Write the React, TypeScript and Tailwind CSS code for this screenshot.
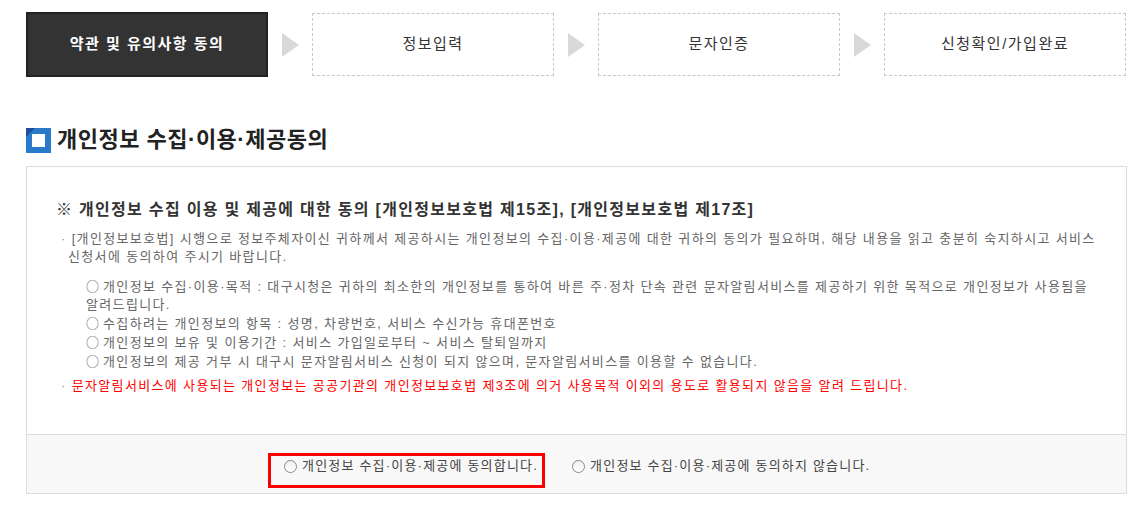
import React from 'react';

const steps = ['약관 및 유의사항 동의', '정보입력', '문자인증', '신청확인/가입완료'];

function Arrow() {
  return (
    <div className="w-[44px] flex justify-center">
      <div className="w-0 h-0 border-y-[12px] border-y-transparent border-l-[17px] border-l-[#d9d9d9]" />
    </div>
  );
}

function TitleIcon() {
  return (
    <svg width="25" height="25" viewBox="0 0 25 25">
      <rect x="0" y="0" width="25" height="25" fill="#2a7acb" />
      <polygon points="0,0 9,0 0,9" fill="#1f4f9a" />
      <rect x="6" y="6" width="13" height="13" fill="#fff" />
    </svg>
  );
}

function Radio() {
  return (
    <span className="inline-block w-[13px] h-[13px] rounded-full border border-[#8a8a8a] bg-gradient-to-b from-[#f0f0f0] to-white mr-[5px] shrink-0" />
  );
}

function Circle() {
  return <span className="font-['Noto_Sans_CJK_KR',sans-serif] tracking-normal pr-[4px]">○</span>;
}

export default function App() {
  return (
    <div className="w-[1143px] h-[510px] bg-white overflow-hidden font-['Liberation_Sans','Noto_Sans_CJK_KR',sans-serif] break-keep">
      <div className="flex items-center pl-[26px] pt-[12px]">
        {steps.map((s, i) => (
          <React.Fragment key={s}>
            {i > 0 && <Arrow />}
            {i === 0 ? (
              <div className="w-[242px] h-[65px] bg-[#333] border-2 border-[#222] flex items-center justify-center text-white font-bold text-[15px] tracking-[1.5px]">
                {s}
              </div>
            ) : (
              <div className="w-[242px] h-[63px] border border-dashed border-[#c8c8c8] flex items-center justify-center text-[#333] text-[15px] tracking-[1.5px]">
                {s}
              </div>
            )}
          </React.Fragment>
        ))}
      </div>

      <div className="flex items-center gap-[6px] pl-[26px] mt-[50px]">
        <TitleIcon />
        <h2 className="text-[22px] font-bold text-[#222] leading-[26px] tracking-[0.5px]">개인정보 수집·이용·제공동의</h2>
      </div>

      <div className="ml-[26px] mt-[13px] w-[1101px] border border-[#dcdcdc]">
        <div className="pt-[33px] pb-[39px] pr-[20px]">
          <p className="pl-[29px] text-[16px] font-bold text-[#333] leading-[20px] tracking-[1.3px]">
            ※ 개인정보 수집 이용 및 제공에 대한 동의 [개인정보보호법 제15조], [개인정보보호법 제17조]
          </p>
          <div className="text-[13px] tracking-[1.35px]">
            <p className="mt-[10px] pl-[41px] -indent-[7px] text-[#666] leading-[18px]">
              <span className="text-[#999]">· </span>[개인정보보호법] 시행으로 정보주체자이신 귀하께서 제공하시는 개인정보의 수집·이용·제공에 대한 귀하의 동의가 필요하며, 해당 내용을 읽고 충분히 숙지하시고 서비스 신청서에 동의하여 주시기 바랍니다.
            </p>
            <ul className="mt-[11px] pl-[59px] text-[#666] leading-[18px]">
              <li><Circle />개인정보 수집·이용·목적 : 대구시청은 귀하의 최소한의 개인정보를 통하여 바른 주·정차 단속 관련 문자알림서비스를 제공하기 위한 목적으로 개인정보가 사용됨을 알려드립니다.</li>
              <li><Circle />수집하려는 개인정보의 항목 : 성명, 차량번호, 서비스 수신가능 휴대폰번호</li>
              <li><Circle />개인정보의 보유 및 이용기간 : 서비스 가입일로부터 ~ 서비스 탈퇴일까지</li>
              <li><Circle />개인정보의 제공 거부 시 대구시 문자알림서비스 신청이 되지 않으며, 문자알림서비스를 이용할 수 없습니다.</li>
            </ul>
            <p className="mt-[6px] pl-[41px] -indent-[7px] leading-[18px]">
              <span className="text-[#999]">· </span>
              <span className="text-[#f00]">문자알림서비스에 사용되는 개인정보는 공공기관의 개인정보보호법 제3조에 의거 사용목적 이외의 용도로 활용되지 않음을 알려 드립니다.</span>
            </p>
          </div>
        </div>
        <div className="h-[59px] border-t border-[#dcdcdc] bg-[#f8f8f8] flex items-start gap-[27px] pl-[241px] pt-[18px] text-[13px] text-[#444] tracking-[1.2px]">
          <label className="h-[35px] pl-[13px] pr-[4px] pt-[1px] border-[3px] border-[#f00] flex items-start leading-[18px]">
            <span className="h-[18px] flex items-center"><Radio /></span>
            개인정보 수집·이용·제공에 동의합니다.
          </label>
          <label className="pt-[4px] flex items-start leading-[18px]">
            <span className="h-[18px] flex items-center"><Radio /></span>
            개인정보 수집·이용·제공에 동의하지 않습니다.
          </label>
        </div>
      </div>
    </div>
  );
}
